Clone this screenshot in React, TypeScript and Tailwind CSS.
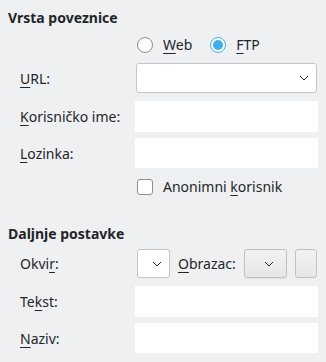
import React from "react";

const Chevron = () => (
  <svg width="10" height="6" viewBox="0 0 10 6" fill="none">
    <path d="M1 1l4 4 4-4" stroke="#232629" strokeWidth="1" />
  </svg>
);

const Row = ({ label, children, className }: { label: React.ReactNode; children: React.ReactNode; className: string }) => (
  <div className={`flex items-center ${className}`}>
    <div className="w-[127px] pl-3">{label}</div>
    <div className="flex h-full w-[183px] items-center">{children}</div>
  </div>
);

const TextBox = () => <div className="h-full w-full bg-white" />;

const U = ({ children }: { children: React.ReactNode }) => (
  <span className="underline decoration-1 underline-offset-[3px]">{children}</span>
);

export default function App() {
  return (
    <div className="h-[362px] w-[326px] bg-[#eff0f1] px-2 pt-2 text-[14px] text-[#232629] [font-family:'Noto_Sans',sans-serif]">
      <div className="h-5 font-bold leading-5">Vrsta poveznice</div>

      <div className="mt-[7px] flex h-5 items-center pl-[129px]">
        <span className="flex h-4 w-4 items-center justify-center rounded-full border border-[#8c8e90] bg-white" />
        <span className="ml-[10px] leading-5">
          <U>W</U>eb
        </span>
        <span className="ml-[18px] flex h-4 w-4 items-center justify-center rounded-full border border-[#3daee9] bg-white">
          <span className="h-[10px] w-[10px] rounded-full bg-[#3daee9]" />
        </span>
        <span className="ml-[10px] leading-5">
          <U>F</U>TP
        </span>
      </div>

      <Row className="mt-2 h-[30px]" label={<><U>U</U>RL:</>}>
        <div className="ml-px flex h-full w-[181px] items-center justify-end rounded-[3px] border border-[#c2c4c6] bg-white pr-[7px]">
          <Chevron />
        </div>
      </Row>

      <Row className="mt-2 h-[31px]" label={<><U>K</U>orisničko ime:</>}>
        <TextBox />
      </Row>

      <Row className="mt-[6px] h-[30px]" label={<><U>L</U>ozinka:</>}>
        <TextBox />
      </Row>

      <div className="mt-[9px] flex h-5 items-center pl-[129px]">
        <span className="h-4 w-4 rounded-[3px] border border-[#8c8e90] bg-white" />
        <span className="ml-[10px] leading-5">
          Anonimni <U>k</U>orisnik
        </span>
      </div>

      <div className="mt-[27px] h-5 font-bold leading-5">Daljnje postavke</div>

      <Row className="mt-[5px] h-[29px]" label={<>Okvi<U>r</U>:</>}>
        <div className="ml-[2px] flex h-full w-[33px] items-center justify-end rounded-[3px] border border-[#c2c4c6] bg-white pr-[7px]">
          <Chevron />
        </div>
        <span className="ml-[8px] leading-5">
          <U>O</U>brazac:
        </span>
        <div className="ml-[8px] flex h-full w-[43px] items-center justify-end rounded-[3px] border border-[#bfc1c3] bg-gradient-to-b from-[#f2f3f4] to-[#e4e6e8] pr-[12px] shadow-[0_1px_1px_rgba(0,0,0,0.06)]">
          <Chevron />
        </div>
        <div className="ml-[8px] h-full w-[22px] rounded-[3px] border border-[#bfc1c3] bg-gradient-to-b from-[#f2f3f4] to-[#e4e6e8]" />
      </Row>

      <Row className="mt-2 h-[31px]" label={<>Te<U>k</U>st:</>}>
        <TextBox />
      </Row>

      <Row className="mt-[6px] h-[30px]" label={<><U>N</U>aziv:</>}>
        <TextBox />
      </Row>
    </div>
  );
}
